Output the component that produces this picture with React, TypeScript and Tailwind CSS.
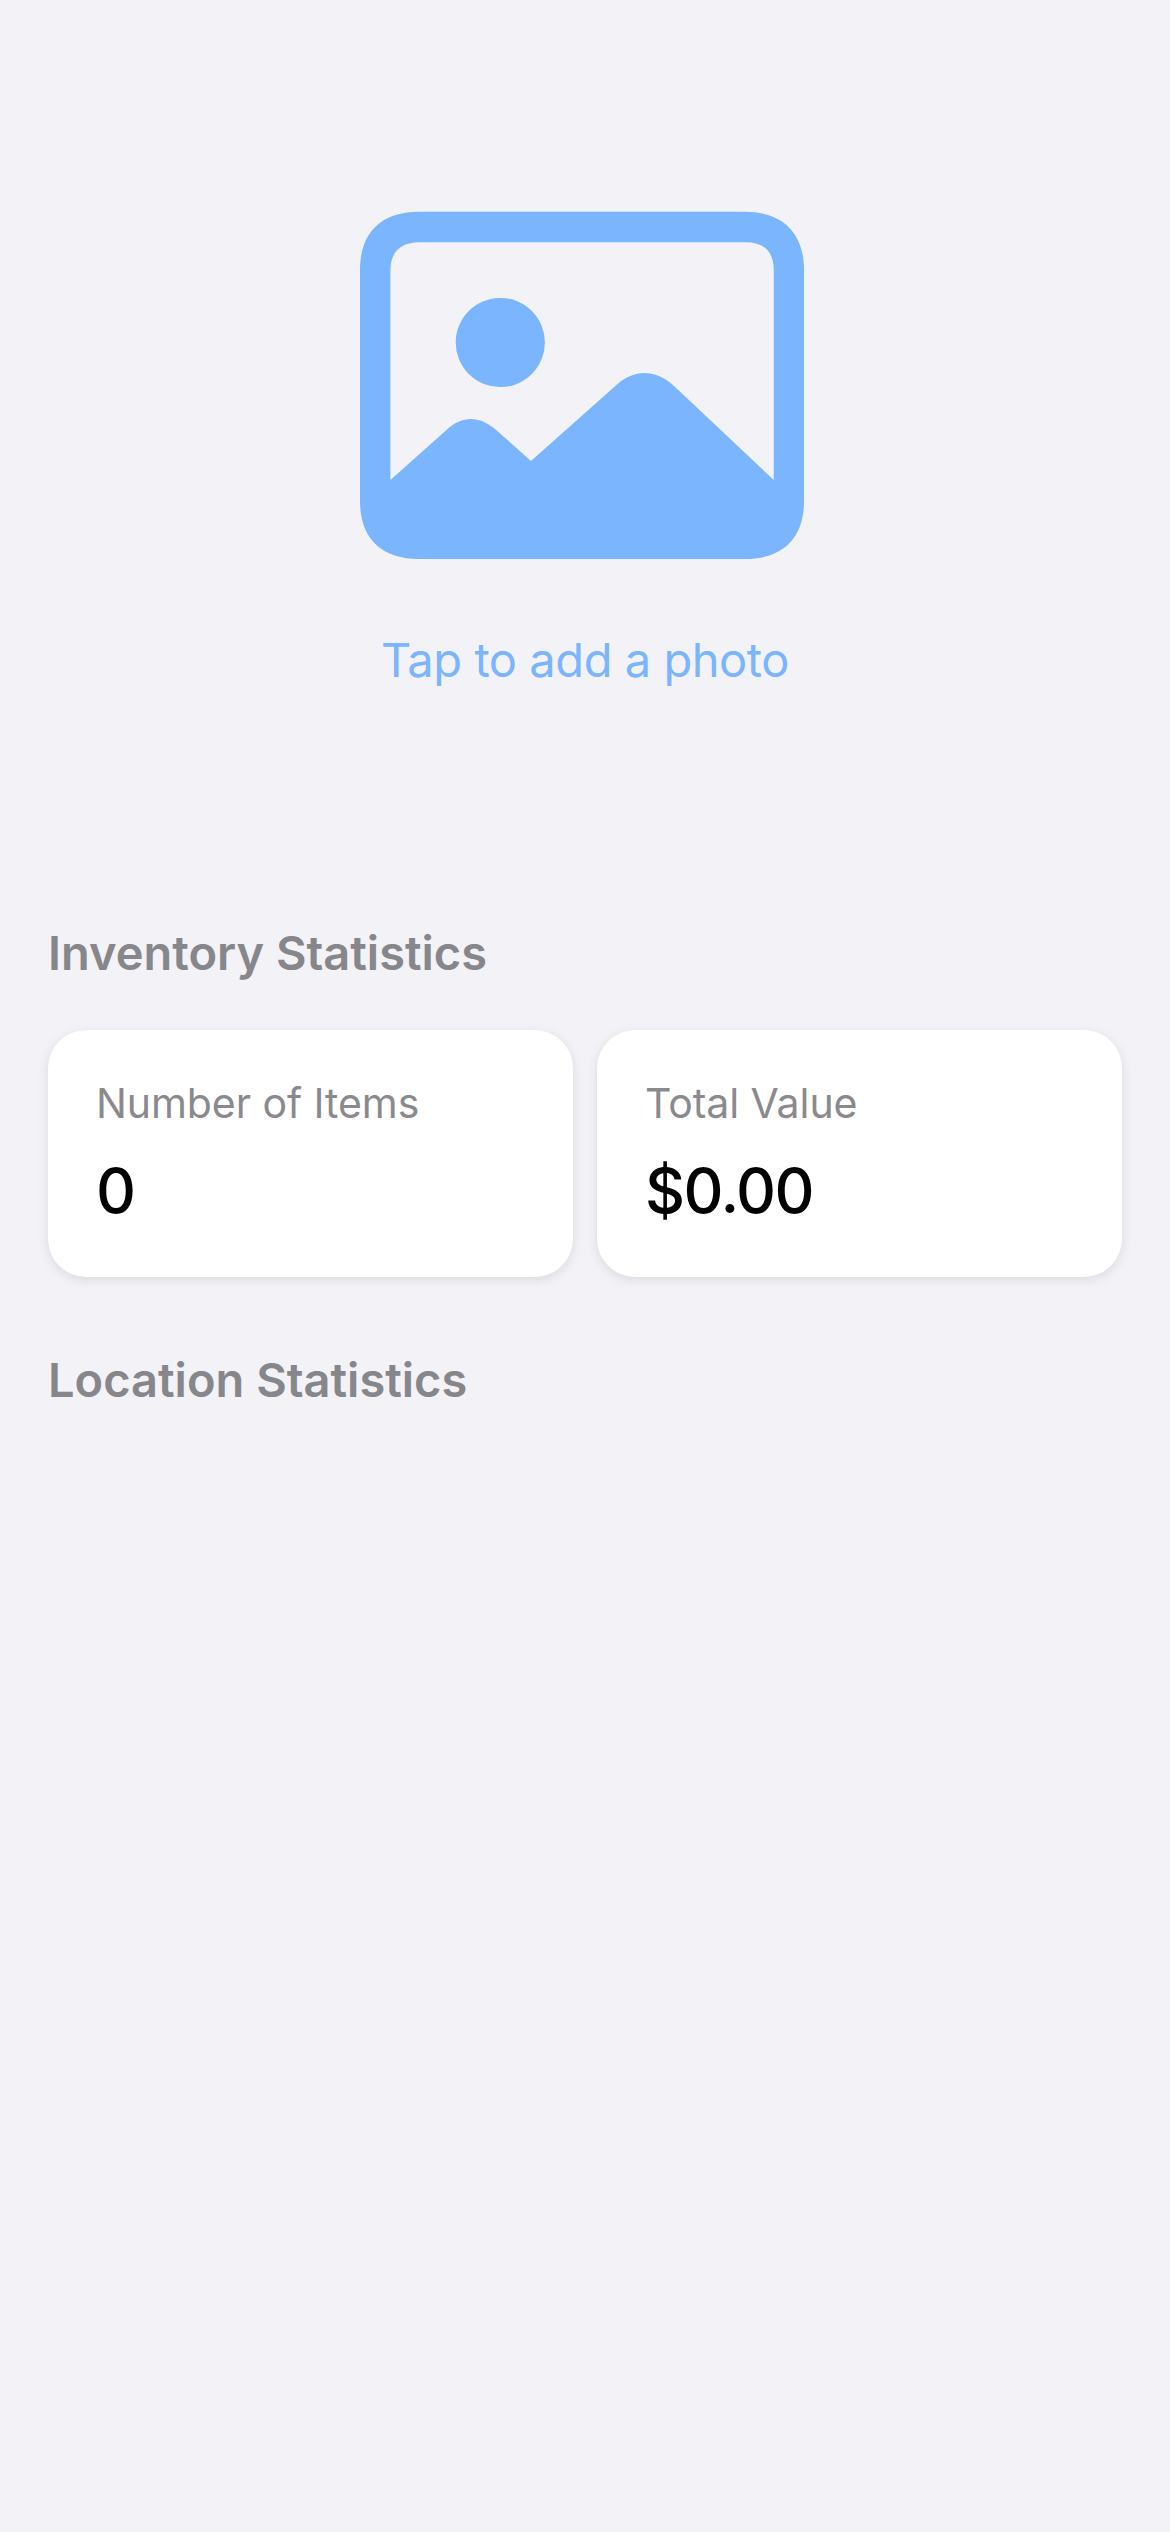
import React from 'react';

function PhotoIcon() {
  return (
    <svg
      width="450"
      height="348"
      viewBox="360 211 450 348"
      fill="#7ab5fd"
      fillRule="evenodd"
      aria-hidden="true"
    >
      <path d="M419 211.8H745C783 211.8 804 233 804 270V501C804 538 783 559 745 559H419C381 559 360 538 360 501V270C360 233 381 211.8 419 211.8ZM419 242.2C401 242.2 390.4 252 390.4 270V480L447 429.5C462 415.5 479 415.5 495 429L531 461L617 384.5C634 369 655 369 673 385L773.8 480V270C773.8 252 764 242.2 746 242.2Z" />
      <circle cx="500.3" cy="342.5" r="44.6" />
    </svg>
  );
}

function SectionTitle({ children }: { children: React.ReactNode }) {
  return (
    <h2 className="text-[47px] leading-[58px] font-semibold text-[#87868b]">
      {children}
    </h2>
  );
}

function StatCard({ label, value }: { label: string; value: string }) {
  return (
    <div className="flex flex-1 flex-col gap-6 rounded-[38px] bg-white px-12 pt-12 pb-[47px] shadow-[0_3px_12px_rgba(0,0,0,0.1)]">
      <div className="text-[41px] leading-[50px] tracking-[-0.08px] text-[#8a8a8e]">{label}</div>
      <div className="text-[62px] leading-[78px] font-medium tracking-[-1.5px] text-black">{value}</div>
    </div>
  );
}

export default function App() {
  return (
    <main className="flex min-h-[2532px] w-full flex-col bg-[#f2f2f7] px-12 pt-[211px] font-['Inter',sans-serif]">
      <button type="button" className="flex flex-col items-center gap-[72px]">
        <PhotoIcon />
        <span className="text-[47px] leading-[58px] tracking-[-0.45px] text-[#7ab5fd]">
          Tap to add a photo
        </span>
      </button>
      <section className="mt-[235px] flex flex-col gap-12">
        <SectionTitle>Inventory Statistics</SectionTitle>
        <div className="flex gap-6">
          <StatCard label="Number of Items" value="0" />
          <StatCard label="Total Value" value="$0.00" />
        </div>
      </section>
      <section className="mt-[74px]">
        <SectionTitle>Location Statistics</SectionTitle>
      </section>
    </main>
  );
}
